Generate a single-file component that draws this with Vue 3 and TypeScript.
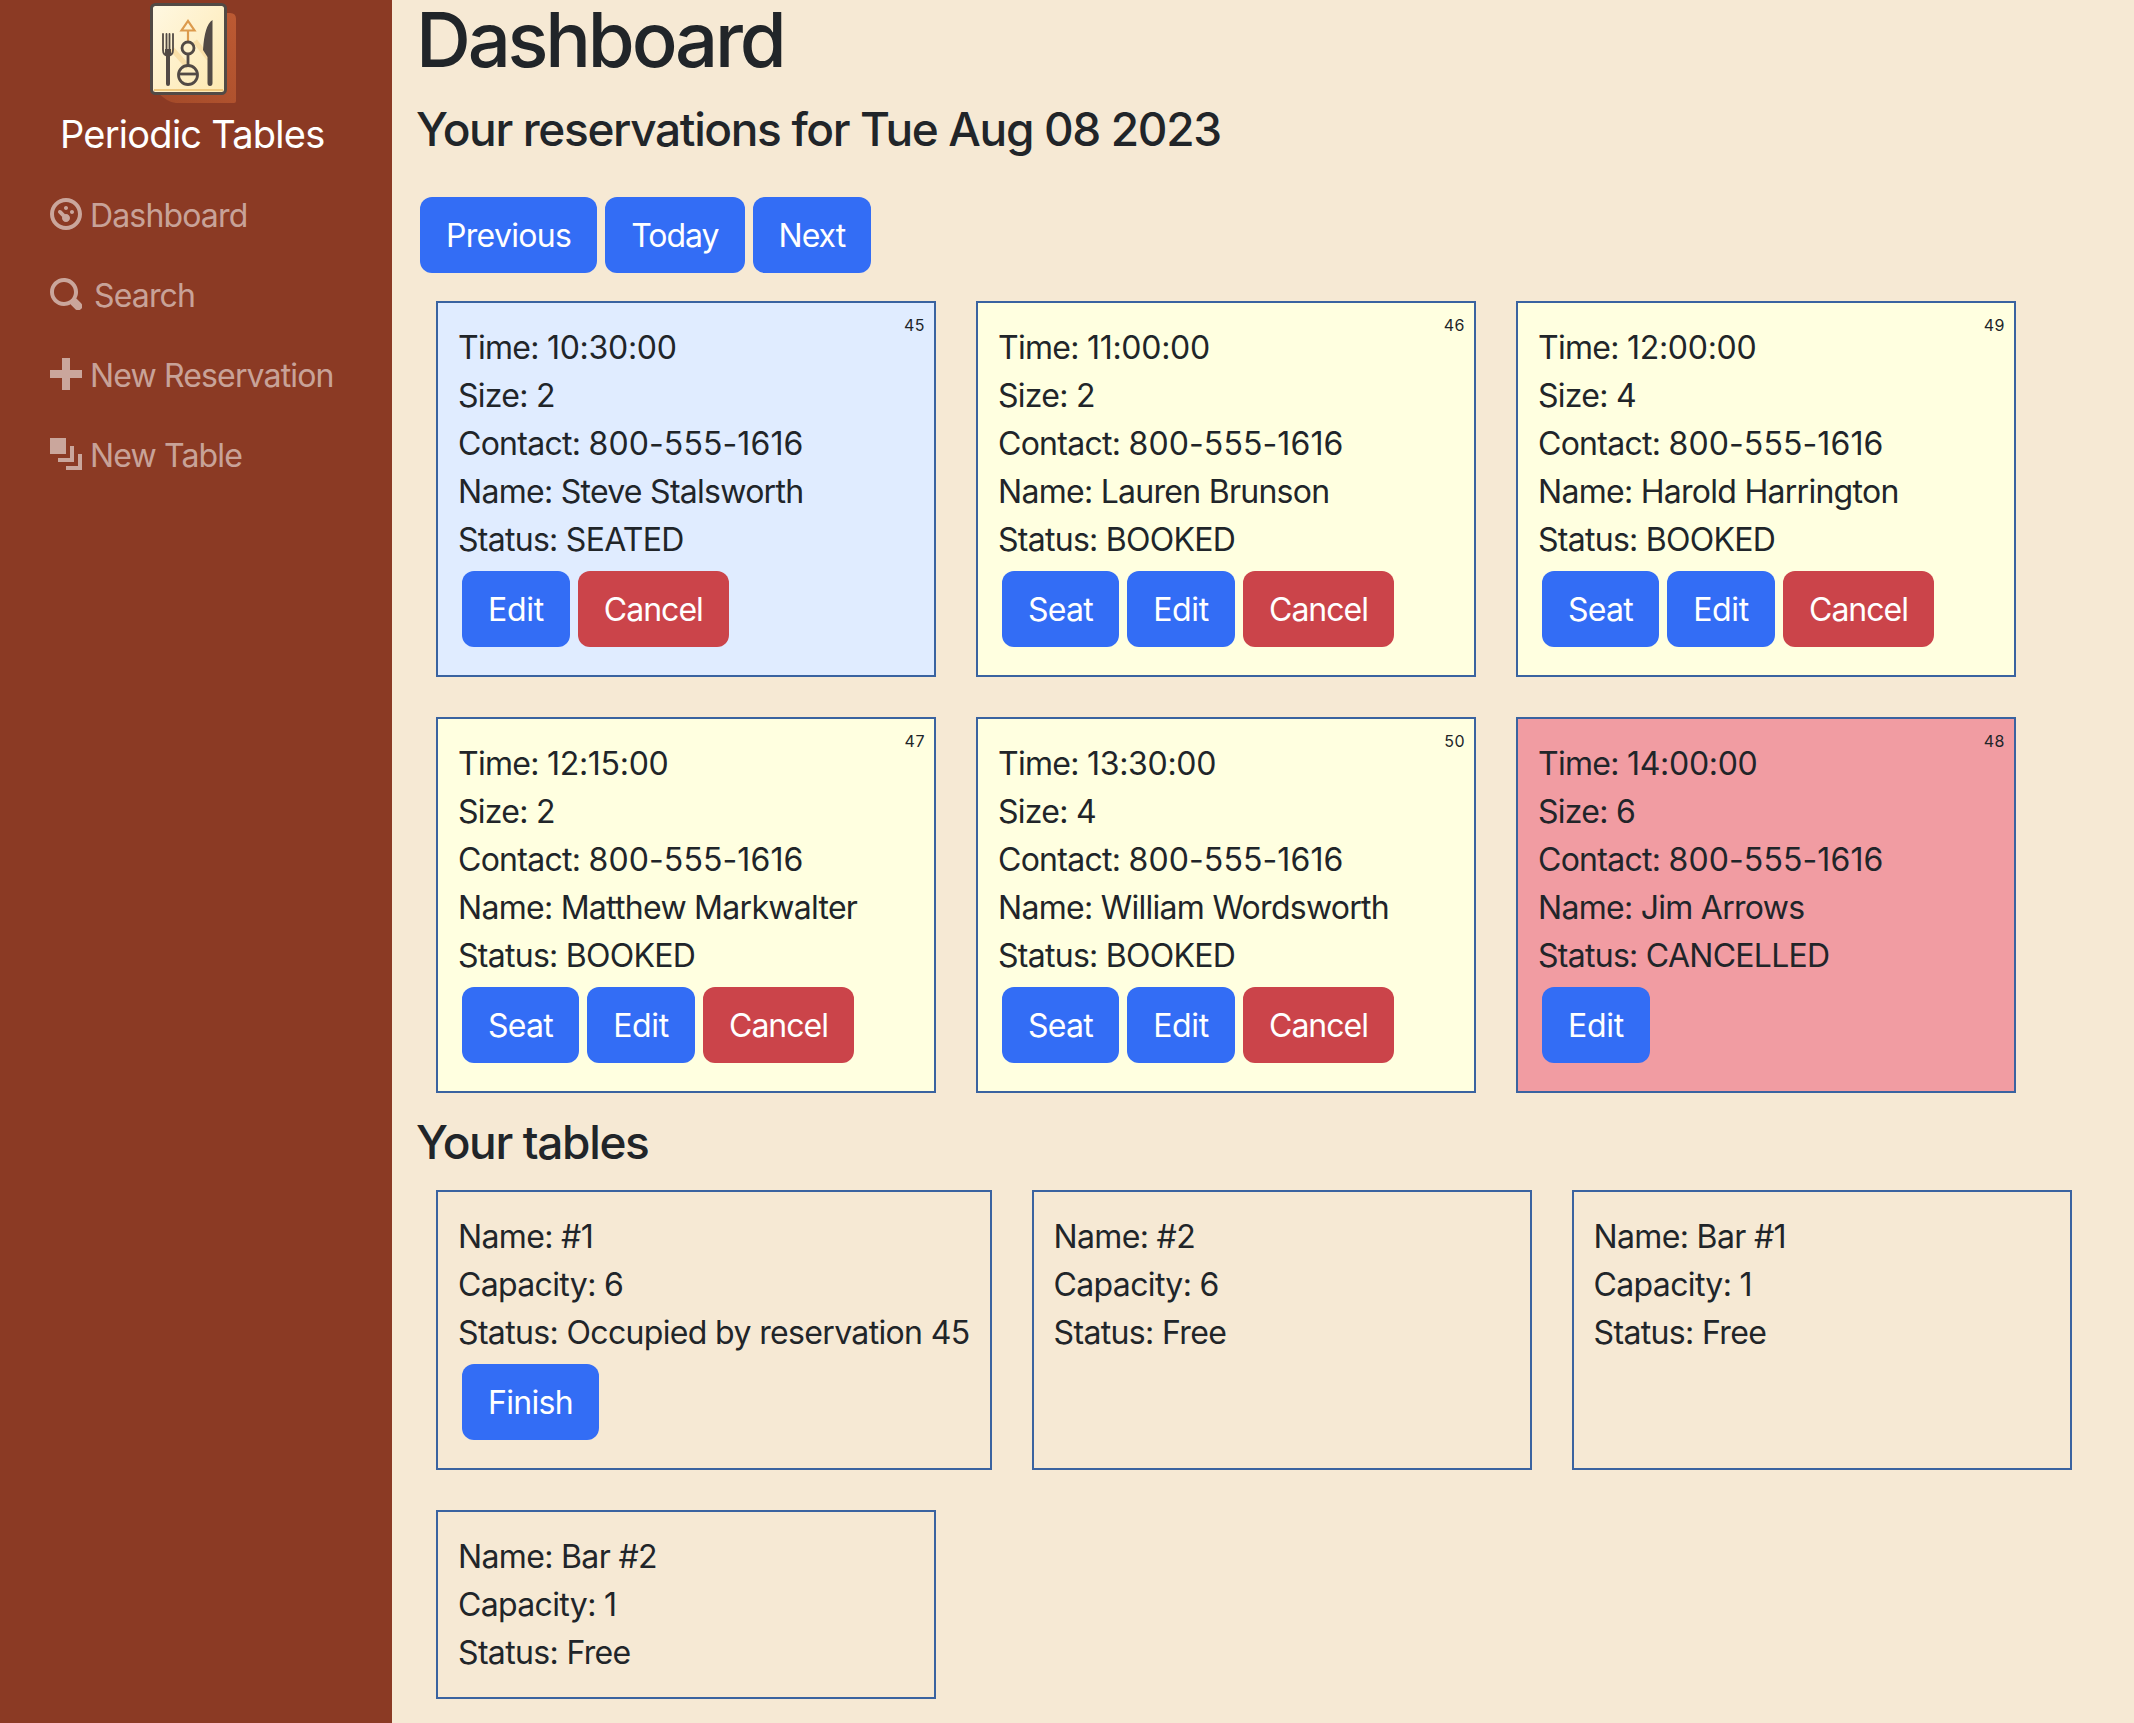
<script setup lang="ts">
interface Reservation { id: number; time: string; size: number; name: string; status: string; tone: string; actions: string[] }
interface DiningTable { name: string; capacity: number; status: string; finish?: boolean }

const reservations: Reservation[] = [
  { id: 45, time: '10:30:00', size: 2, name: 'Steve Stalsworth', status: 'SEATED', tone: 'seated', actions: ['Edit', 'Cancel'] },
  { id: 46, time: '11:00:00', size: 2, name: 'Lauren Brunson', status: 'BOOKED', tone: 'booked', actions: ['Seat', 'Edit', 'Cancel'] },
  { id: 49, time: '12:00:00', size: 4, name: 'Harold Harrington', status: 'BOOKED', tone: 'booked', actions: ['Seat', 'Edit', 'Cancel'] },
  { id: 47, time: '12:15:00', size: 2, name: 'Matthew Markwalter', status: 'BOOKED', tone: 'booked', actions: ['Seat', 'Edit', 'Cancel'] },
  { id: 50, time: '13:30:00', size: 4, name: 'William Wordsworth', status: 'BOOKED', tone: 'booked', actions: ['Seat', 'Edit', 'Cancel'] },
  { id: 48, time: '14:00:00', size: 6, name: 'Jim Arrows', status: 'CANCELLED', tone: 'cancelled', actions: ['Edit'] },
]
const tables: DiningTable[] = [
  { name: '#1', capacity: 6, status: 'Occupied by reservation 45', finish: true },
  { name: '#2', capacity: 6, status: 'Free' },
  { name: 'Bar #1', capacity: 1, status: 'Free' },
  { name: 'Bar #2', capacity: 1, status: 'Free' },
]
const nav = [
  { label: 'Dashboard', wide: false, d: 'M4 0c-2.2 0-4 1.8-4 4s1.8 4 4 4 4-1.8 4-4-1.8-4-4-4zm0 1c1.66 0 3 1.34 3 3s-1.34 3-3 3-3-1.34-3-3 1.34-3 3-3zm0 1c-.28 0-.5.22-.5.5s.22.5.5.5.5-.22.5-.5-.22-.5-.5-.5zm-1.66 1a.5.5 0 0 0-.19.84l.91.91c-.02.08-.06.16-.06.25 0 .55.45 1 1 1s1-.45 1-1-.45-1-1-1c-.09 0-.17.04-.25.06l-.91-.91a.5.5 0 0 0-.44-.16.5.5 0 0 0-.06 0zm3.16 0c-.28 0-.5.22-.5.5s.22.5.5.5.5-.22.5-.5-.22-.5-.5-.5z' },
  { label: 'Search', wide: true, d: 'M3.5 0c-1.93 0-3.5 1.57-3.5 3.5s1.57 3.5 3.5 3.5c.59 0 1.17-.14 1.66-.41a1 1 0 0 0 .13.13l1 1a1.02 1.02 0 1 0 1.44-1.44l-1-1a1 1 0 0 0-.16-.13c.27-.49.44-1.06.44-1.66 0-1.93-1.57-3.5-3.5-3.5zm0 1c1.39 0 2.5 1.11 2.5 2.5 0 .66-.24 1.27-.66 1.72-.01.01-.02.02-.03.03a1 1 0 0 0-.13.13c-.44.4-1.04.63-1.69.63-1.39 0-2.5-1.11-2.5-2.5s1.11-2.5 2.5-2.5z' },
  { label: 'New Reservation', wide: false, d: 'M3 0v3h-3v2h3v3h2v-3h3v-2h-3v-3h-2z' },
  { label: 'New Table', wide: false, d: 'M0 0v4h4v-4h-4zm5 2v3h-3v1h4v-4h-1zm2 2v3h-3v1h4v-4h-1z' },
]
</script>

<template>
  <div class="page">
    <aside class="sidebar">
      <svg class="logo" viewBox="0 0 90 104" aria-hidden="true">
        <defs>
          <linearGradient id="tile" x1="0" y1="0" x2="1" y2="1">
            <stop offset="0" stop-color="#fff8e2" />
            <stop offset="1" stop-color="#fde8b0" />
          </linearGradient>
          <linearGradient id="back" x1="0" y1="1" x2="1" y2="0">
            <stop offset="0" stop-color="#a34a29" />
            <stop offset="1" stop-color="#bd5a33" />
          </linearGradient>
        </defs>
        <path d="M6 88V10h74q6 0 6 6v82q0 2-2 2H26q-8 0-20-12z" fill="url(#back)" />
        <rect x="1.500" y="1.500" width="74" height="89" rx="4" fill="url(#tile)" stroke="#524a45" stroke-width="3" />
        <rect x="4" y="86" width="69" height="2" fill="#eec77c" />
        <path d="M22 46l16 18M45 38l14 18" stroke="#f9dfa8" stroke-width="5" fill="none" />
        <path d="M38 40V28M31.500 27.500h13L38 18z" stroke="#dc9a4c" stroke-width="2.200" fill="none" />
        <circle cx="38" cy="45" r="6" fill="none" stroke="#524a45" stroke-width="2.800" />
        <path d="M38 51v12" stroke="#524a45" stroke-width="2.800" />
        <circle cx="38" cy="72" r="9.500" fill="none" stroke="#524a45" stroke-width="2.800" />
        <path d="M29 71h18" stroke="#524a45" stroke-width="2.800" />
        <path d="M13 31v16q0 5 5 6M16.500 31v18M19.500 31v18M23 31v16q0 5-5 6" stroke="#524a45" stroke-width="1.800" fill="none" stroke-linecap="round" />
        <path d="M15 46h6v6h-6zM16 50h4v31q0 2-2 2t-2-2z" fill="#524a45" />
        <path d="M62.500 17q-8 5-9.500 30l4.500 7v26q0 3 2.500 3t2.500-3z" fill="#524a45" />
      </svg>
      <div class="brand">Periodic Tables</div>
      <nav class="nav">
        <a v-for="item in nav" :key="item.label" class="nav-link" :class="{ wide: item.wide }">
          <svg class="nav-icon" viewBox="0 0 8 8" aria-hidden="true"><path :d="item.d" /></svg>
          <span>{{ item.label }}</span>
        </a>
      </nav>
    </aside>

    <main class="main">
      <h1>Dashboard</h1>
      <h4 class="sub">Your reservations for Tue Aug 08 2023</h4>
      <div class="pager">
        <button class="btn blue">Previous</button>
        <button class="btn blue tight">Today</button>
        <button class="btn blue tight">Next</button>
      </div>

      <section class="cards first">
        <article v-for="r in reservations" :key="r.id" class="card" :class="r.tone">
          <span class="card-id">{{ r.id }}</span>
          <div>Time: <span class="time">{{ r.time }}</span></div>
          <div>Size: {{ r.size }}</div>
          <div>Contact: <span class="num">800-555-1616</span></div>
          <div>Name: {{ r.name }}</div>
          <div>Status: {{ r.status }}</div>
          <div class="actions">
            <button
              v-for="a in r.actions"
              :key="a"
              class="btn"
              :class="[a === 'Cancel' ? 'red tight' : 'blue', { loose: a === 'Edit' }]"
            >{{ a }}</button>
          </div>
        </article>
      </section>

      <h4>Your tables</h4>
      <section class="cards">
        <article v-for="t in tables" :key="t.name" class="card table-card">
          <div>Name: {{ t.name }}</div>
          <div>Capacity: {{ t.capacity }}</div>
          <div>Status: {{ t.status }}</div>
          <div v-if="t.finish" class="actions"><button class="btn blue">Finish</button></div>
        </article>
      </section>
    </main>
  </div>
</template>

<style>
html, body { margin: 0; background: #f6e9d4; }
</style>

<style scoped>
.page {
  display: flex;
  height: 1723px;
  overflow: hidden;
  font-family: Inter, "Liberation Sans", sans-serif;
  font-size: 32px;
  line-height: 48px;
  letter-spacing: -0.72px;
  color: #212529;
  background: #f6e9d4;
}
.sidebar {
  width: 392px;
  flex: none;
  background: #8b3a24;
  display: flex;
  flex-direction: column;
  padding-top: 3px;
  box-sizing: border-box;
}
.logo { width: 90px; height: 104px; margin-left: 150px; display: block; }
.brand {
  color: #fff;
  font-size: 38px;
  line-height: 48px;
  margin-top: 3px;
  margin-left: 60px;
  white-space: nowrap;
  letter-spacing: -0.75px;
}
.nav { display: flex; flex-direction: column; margin-top: 18px; }
.nav-link {
  display: flex;
  align-items: center;
  gap: 8px;
  height: 80px;
  padding-left: 50px;
  color: rgba(255, 255, 255, 0.55);
  letter-spacing: -0.85px;
}
.nav-link.wide { gap: 12px; }
.nav-icon { width: 32px; height: 32px; fill: rgba(255, 255, 255, 0.55); flex: none; margin-top: -4px; }
.main { flex: 1; min-width: 0; padding-left: 24px; }
h1 { margin: 0 0 22px; font-size: 76px; line-height: 78px; font-weight: 500; letter-spacing: -3.2px; }
h4 { margin: 0; font-size: 46px; line-height: 58px; font-weight: 500; letter-spacing: -1.35px; }
.pager { display: flex; gap: 8px; margin: 39px 0 0 4px; }
.btn {
  font: inherit;
  letter-spacing: -0.7px;
  height: 76px;
  padding: 2px 26px 0;
  border: none;
  border-radius: 12px;
  color: #fff;
  white-space: nowrap;
}
.tight { letter-spacing: -1px; }
.loose { letter-spacing: -0.3px; }
.blue { background: #336df5; }
.red { background: #cb444a; }
.cards { display: flex; flex-wrap: wrap; align-items: stretch; }
.cards.first { margin-top: 8px; }
.card {
  position: relative;
  box-sizing: border-box;
  min-width: 500px;
  margin: 20px;
  padding: 21px 20px 20px;
  border: 2px solid #3a63a0;
}
.table-card { letter-spacing: -0.65px; }
.seated { background: #e0ecff; }
.booked { background: #ffffe0; }
.cancelled { background: #f19ca2; }
.time { letter-spacing: -0.3px; }
.num { letter-spacing: 0.1px; }
.card-id {
  position: absolute;
  top: 10px;
  right: 9px;
  font-size: 16px;
  line-height: 24px;
  letter-spacing: 0.5px;
}
.actions { display: flex; gap: 8px; padding: 7px 4px 8px; }
h4 + .cards { margin-top: -1px; }
</style>
